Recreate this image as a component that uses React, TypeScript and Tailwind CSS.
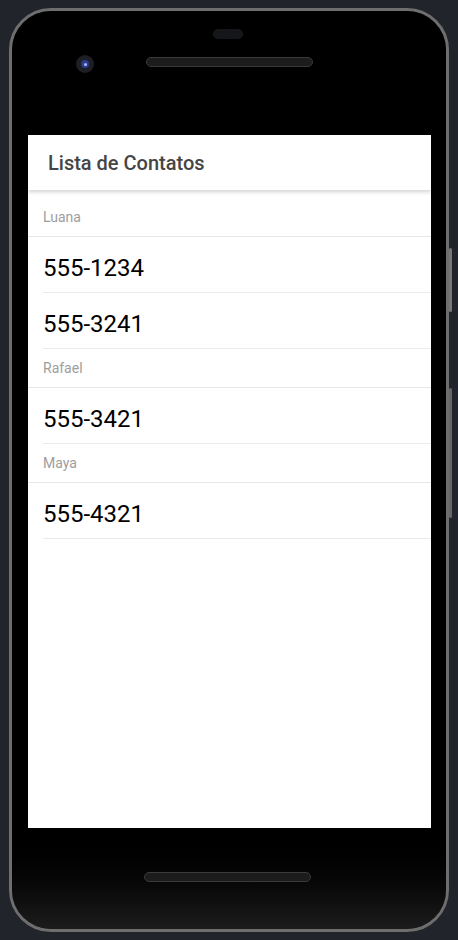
const contatos = [
  { nome: "Luana", numeros: ["555-1234", "555-3241"] },
  { nome: "Rafael", numeros: ["555-3421"] },
  { nome: "Maya", numeros: ["555-4321"] },
];

function SectionHeader({ nome }: { nome: string }) {
  return (
    <div className="h-[39px] flex items-center pl-[15px] border-b border-[#e6e6e6] text-[14px] text-[#9e9e9e]">
      {nome}
    </div>
  );
}

function ContactItem({ numero }: { numero: string }) {
  return (
    <div className="ml-[15px] h-[56px] flex items-center pt-[7px] border-b border-[#ebebeb] text-[24px] text-black">
      {numero}
    </div>
  );
}

export default function App() {
  return (
    <div className="w-[458px] h-[940px] bg-[#21242b] pt-[8px] pl-[9px] overflow-hidden" style={{ fontFamily: "Roboto, 'Noto Sans', sans-serif" }}>
      <div className="relative w-[440px] h-[924px] rounded-[42px] border-[3px] border-[#6e6e6e] shadow-[inset_0_0_0_2px_#2c2c2c]">
        {/* side buttons */}
        <div className="absolute right-[-6px] top-[237px] w-[3px] h-[64px] rounded-sm bg-[#777]" />
        <div className="absolute right-[-6px] top-[377px] w-[3px] h-[130px] rounded-sm bg-[#666]" />

        <div className="w-full h-full rounded-[39px] overflow-hidden bg-gradient-to-b from-black via-black via-[88%] to-[#1c1c1c] flex flex-col pl-[16px] pr-[15px]">
          {/* top bezel */}
          <div className="h-[124px] relative shrink-0">
            <div className="absolute left-[185px] top-[18px] w-[30px] h-[10px] rounded-full bg-[#15161a]" />
            <div className="absolute left-[118px] top-[46px] w-[167px] h-[10px] rounded-full bg-[#1c1c1c] border border-[#3a3a3a]" />
            <div className="absolute left-[48px] top-[44px] w-[18px] h-[18px] rounded-full bg-[#1d1f24] flex items-center justify-center">
              <div className="w-[8px] h-[8px] rounded-full bg-[#2b3d8a] flex items-center justify-center">
                <div className="w-[3px] h-[3px] rounded-full bg-[#a8b8ff]" />
              </div>
            </div>
          </div>

          {/* screen */}
          <div className="h-[693px] bg-white flex flex-col shrink-0">
            <div className="h-[55px] flex items-center pl-[20px] text-[20px] font-medium text-[#454545] shadow-[0_2px_4px_rgba(0,0,0,0.18)] relative z-10">
              Lista de Contatos
            </div>
            <div className="pt-[8px]">
              {contatos.map((c) => (
                <div key={c.nome}>
                  <SectionHeader nome={c.nome} />
                  {c.numeros.map((n) => (
                    <ContactItem key={n} numero={n} />
                  ))}
                </div>
              ))}
            </div>
          </div>

          {/* bottom bezel */}
          <div className="flex-1 flex justify-center pt-[44px]">
            <div className="ml-[-5px] w-[167px] h-[10px] rounded-full bg-[#1c1c1c] border border-[#3a3a3a]" />
          </div>
        </div>
      </div>
    </div>
  );
}
